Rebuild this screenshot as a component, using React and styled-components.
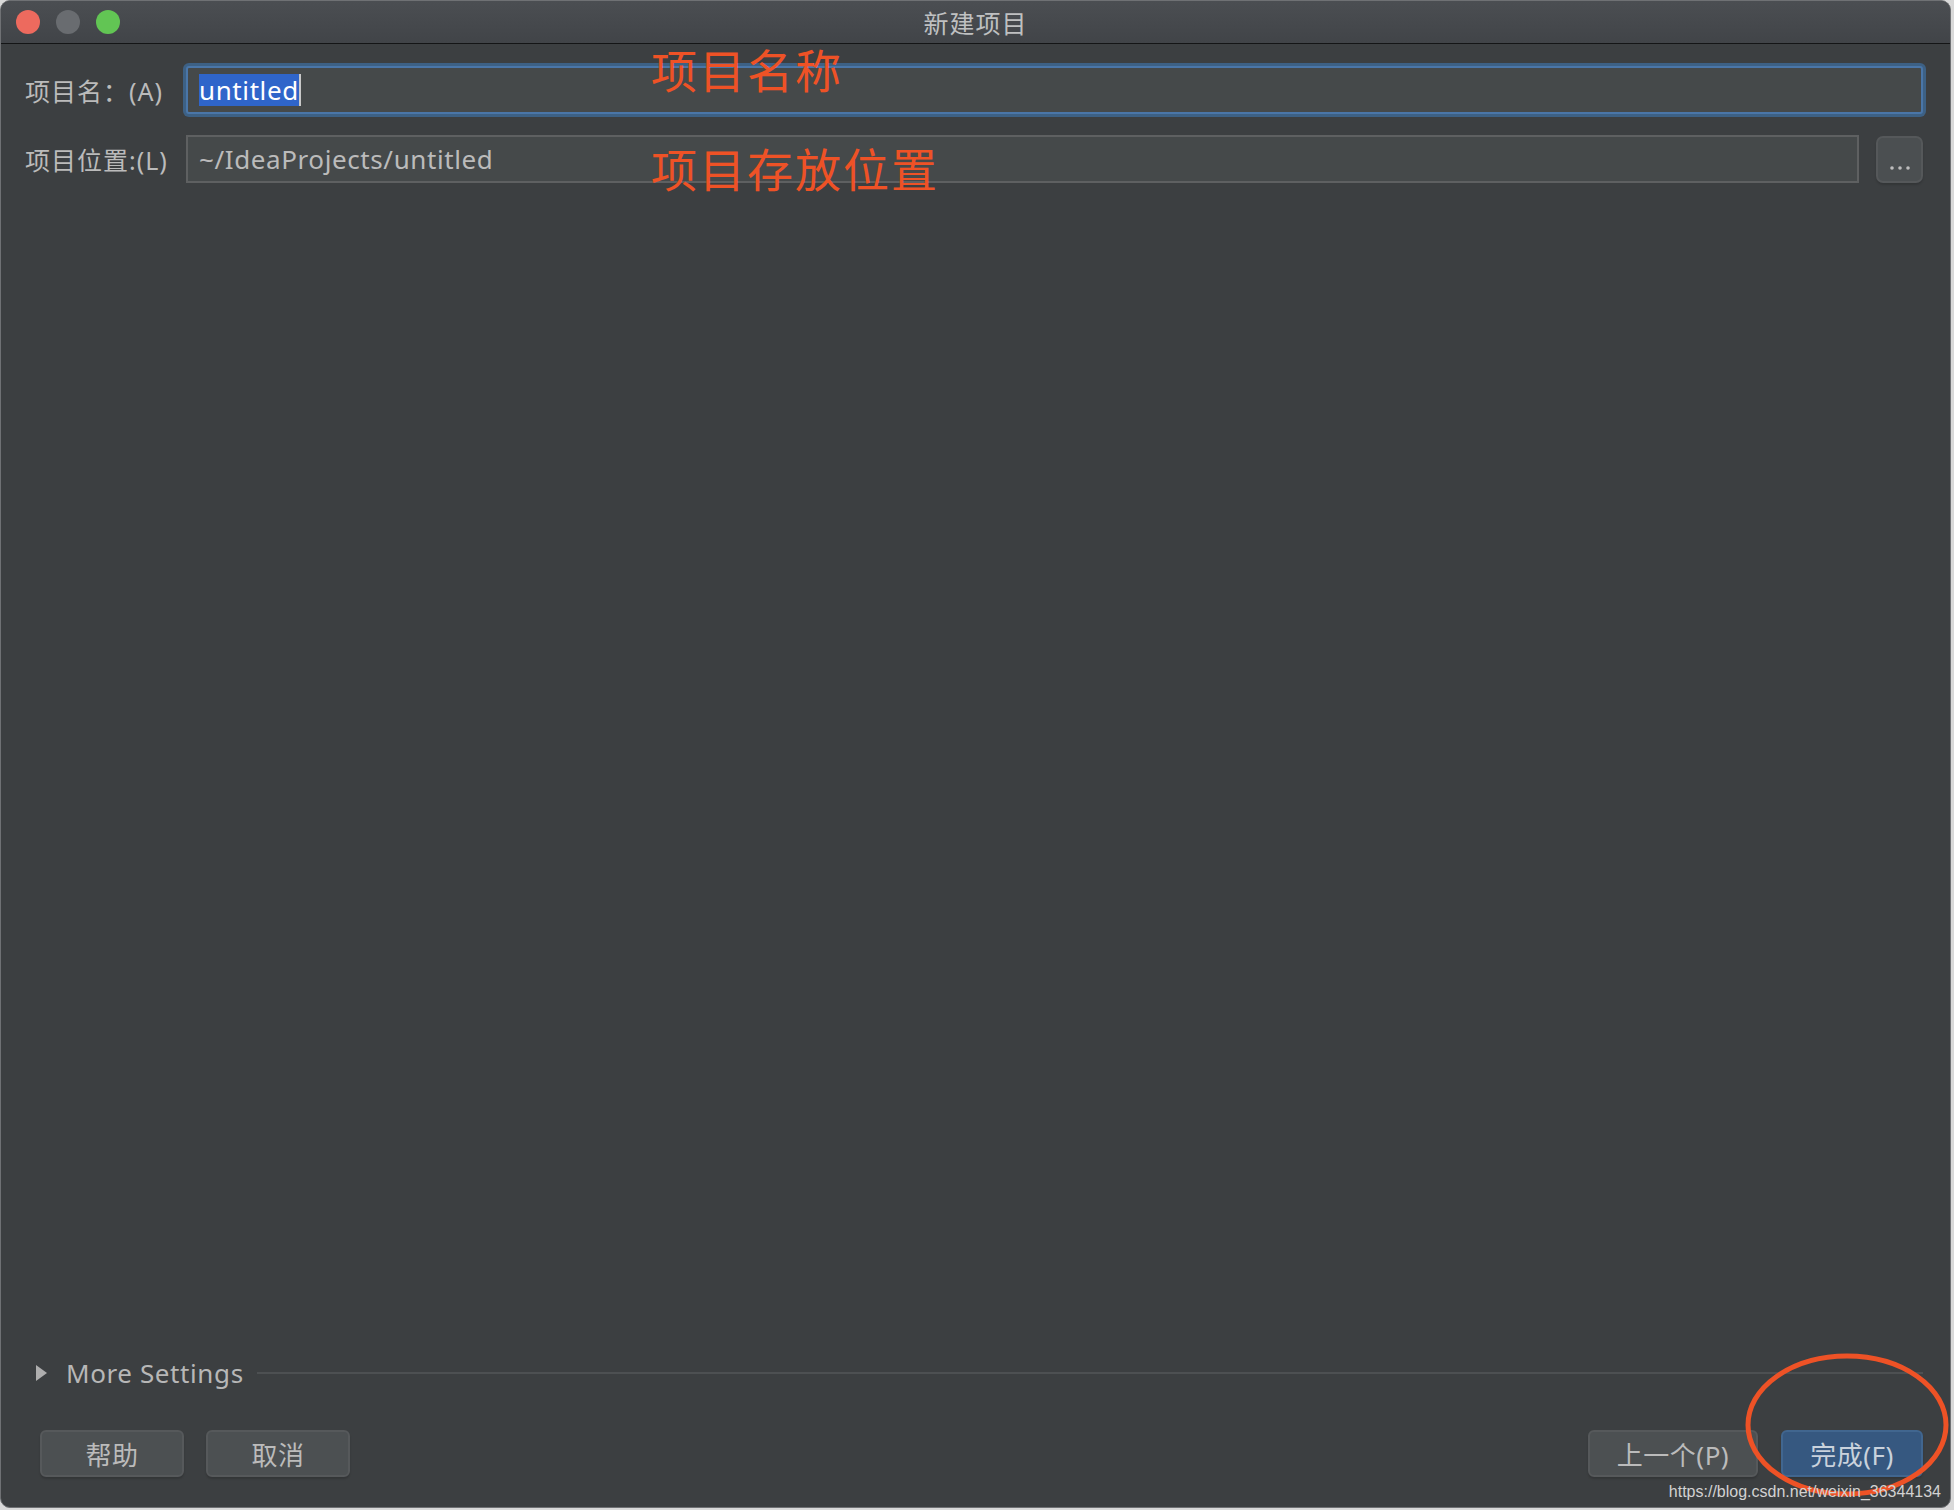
import React from 'react'
import styled, { createGlobalStyle } from 'styled-components'

const GlobalStyle = createGlobalStyle`
    html, body {
        margin: 0;
        padding: 0;
        background: #d9d9d9;
    }
    body {
        font-family: "Noto Sans", "Noto Sans CJK SC", sans-serif;
    }
`

const Window = styled.div`
    position: relative;
    width: 1951px;
    height: 1508px;
    box-sizing: border-box;
    border: 1px solid #6f7174;
    border-radius: 10px;
    background: #3c3f41;
    overflow: hidden;
    display: flex;
    flex-direction: column;
`

const TitleBar = styled.div`
    height: 42px;
    flex: none;
    display: grid;
    grid-template-columns: 1fr auto 1fr;
    align-items: center;
    background: linear-gradient(#4b4e52, #414448);
    border-bottom: 1px solid #141516;
`

const Lights = styled.div`
    display: flex;
    gap: 16px;
    padding-left: 15px;
`

const Light = styled.span`
    width: 24px;
    height: 24px;
    border-radius: 50%;
    background: ${p => p.color};
`

const Title = styled.div`
    font-size: 25px;
    color: #bfc0c1;
    letter-spacing: 1px;
`

const Body = styled.div`
    flex: 1;
    display: flex;
    flex-direction: column;
`

const Form = styled.div`
    display: grid;
    grid-template-columns: 161px 1fr;
    row-gap: 21px;
    align-items: center;
    padding: 22px 27px 0 24px;
`

const Label = styled.div`
    font-size: 25px;
    letter-spacing: 1px;
    color: #bbbbbb;
    white-space: nowrap;
`

const Field = styled.div`
    flex: 1;
    height: 48px;
    box-sizing: border-box;
    display: flex;
    align-items: center;
    padding-left: 11px;
    background: #45494a;
    border: 2px solid ${p => (p.focused ? '#4a76a8' : '#5e6061')};
    border-radius: ${p => (p.focused ? '3px' : '0')};
    box-shadow: ${p => (p.focused ? '0 0 0 3px #3d6185' : 'none')};
    font-size: 26px;
    letter-spacing: 0.6px;
    color: #bbbbbb;
`

const Selected = styled.span`
    background: #2f65ca;
    color: #ffffff;
    line-height: 32px;
`

const Caret = styled.span`
    width: 2px;
    height: 32px;
    background: #c8c8c8;
`

const PathRow = styled.div`
    display: flex;
    align-items: center;
    gap: 17px;
`

const BrowseBtn = styled.div`
    width: 47px;
    height: 47px;
    box-sizing: border-box;
    border: 2px solid #55585a;
    border-radius: 7px;
    background: #4b4f51;
    display: flex;
    justify-content: center;
    padding-top: 28px;
    box-shadow: 0 2px 2px rgba(0, 0, 0, 0.15);
`

const Spacer = styled.div`
    flex: 1;
`

const MoreRow = styled.div`
    height: 30px;
    display: flex;
    align-items: center;
    padding: 0 27px 0 35px;
    margin-bottom: 42px;
`

const MoreText = styled.span`
    font-size: 26px;
    letter-spacing: 0.6px;
    color: #b7b7b7;
    margin-left: 19px;
`

const Rule = styled.div`
    flex: 1;
    height: 2px;
    background: #4d5052;
    margin-left: 13px;
`

const Buttons = styled.div`
    display: flex;
    align-items: center;
    padding: 0 27px 30px 39px;
`

const Group = styled.div`
    display: flex;
    gap: ${p => p.gap}px;
`

const Button = styled.div`
    width: ${p => p.w}px;
    height: 47px;
    box-sizing: border-box;
    display: flex;
    align-items: center;
    justify-content: center;
    border-radius: 6px;
    border: 2px solid ${p => (p.primary ? '#41668f' : '#56595b')};
    background: ${p => (p.primary ? '#365880' : '#4c5052')};
    color: ${p => (p.primary ? '#c9d2dc' : '#bbbbbb')};
    font-size: 26px;
    letter-spacing: 0.5px;
    box-shadow: 0 2px 2px rgba(0, 0, 0, 0.15);
`

const Note = styled.div`
    position: absolute;
    left: 650px;
    top: ${p => p.top}px;
    font-family: "Noto Sans CJK SC", sans-serif;
    font-size: 46px;
    line-height: 1;
    color: #ee5226;
    letter-spacing: 2px;
`

const Ring = styled.svg`
    position: absolute;
    left: 1742px;
    top: 1350px;
`

const Watermark = styled.div`
    position: absolute;
    right: 9px;
    bottom: 6px;
    font-family: "Liberation Sans", Arial, sans-serif;
    font-size: 16px;
    color: #d2d2d2;
`

function App() {
    return (
        <>
            <GlobalStyle />
            <Window>
                <TitleBar>
                    <Lights>
                        <Light color="#ed6a5e" />
                        <Light color="#696c70" />
                        <Light color="#62c554" />
                    </Lights>
                    <Title>新建项目</Title>
                    <div />
                </TitleBar>

                <Body>
                    <Form>
                        <Label>项目名：(A)</Label>
                        <Field focused>
                            <Selected>untitled</Selected>
                            <Caret />
                        </Field>

                        <Label>项目位置:(L)</Label>
                        <PathRow>
                            <Field>~/IdeaProjects/untitled</Field>
                            <BrowseBtn>
                                <svg width="22" height="4" viewBox="0 0 22 4">
                                    <circle cx="3" cy="2" r="1.8" fill="#bdbdbd" />
                                    <circle cx="11" cy="2" r="1.8" fill="#bdbdbd" />
                                    <circle cx="19" cy="2" r="1.8" fill="#bdbdbd" />
                                </svg>
                            </BrowseBtn>
                        </PathRow>
                    </Form>

                    <Spacer />

                    <MoreRow>
                        <svg width="11" height="16" viewBox="0 0 11 16">
                            <path d="M0 0 L11 8 L0 16 Z" fill="#aeaeae" />
                        </svg>
                        <MoreText>More Settings</MoreText>
                        <Rule />
                    </MoreRow>

                    <Buttons>
                        <Group gap={22}>
                            <Button w={144}>帮助</Button>
                            <Button w={144}>取消</Button>
                        </Group>
                        <Spacer />
                        <Group gap={23}>
                            <Button w={170}>上一个(P)</Button>
                            <Button w={142} primary>完成(F)</Button>
                        </Group>
                    </Buttons>
                </Body>

                {/* annotations drawn over the dialog */}
                <Note top={44}>项目名称</Note>
                <Note top={143}>项目存放位置</Note>
                <Ring width="208" height="148" viewBox="0 0 208 148">
                    <ellipse cx="104" cy="74" rx="99" ry="69" fill="none" stroke="#ee5226" strokeWidth="5" />
                </Ring>
                <Watermark>https://blog.csdn.net/weixin_36344134</Watermark>
            </Window>
        </>
    )
}

export default App
